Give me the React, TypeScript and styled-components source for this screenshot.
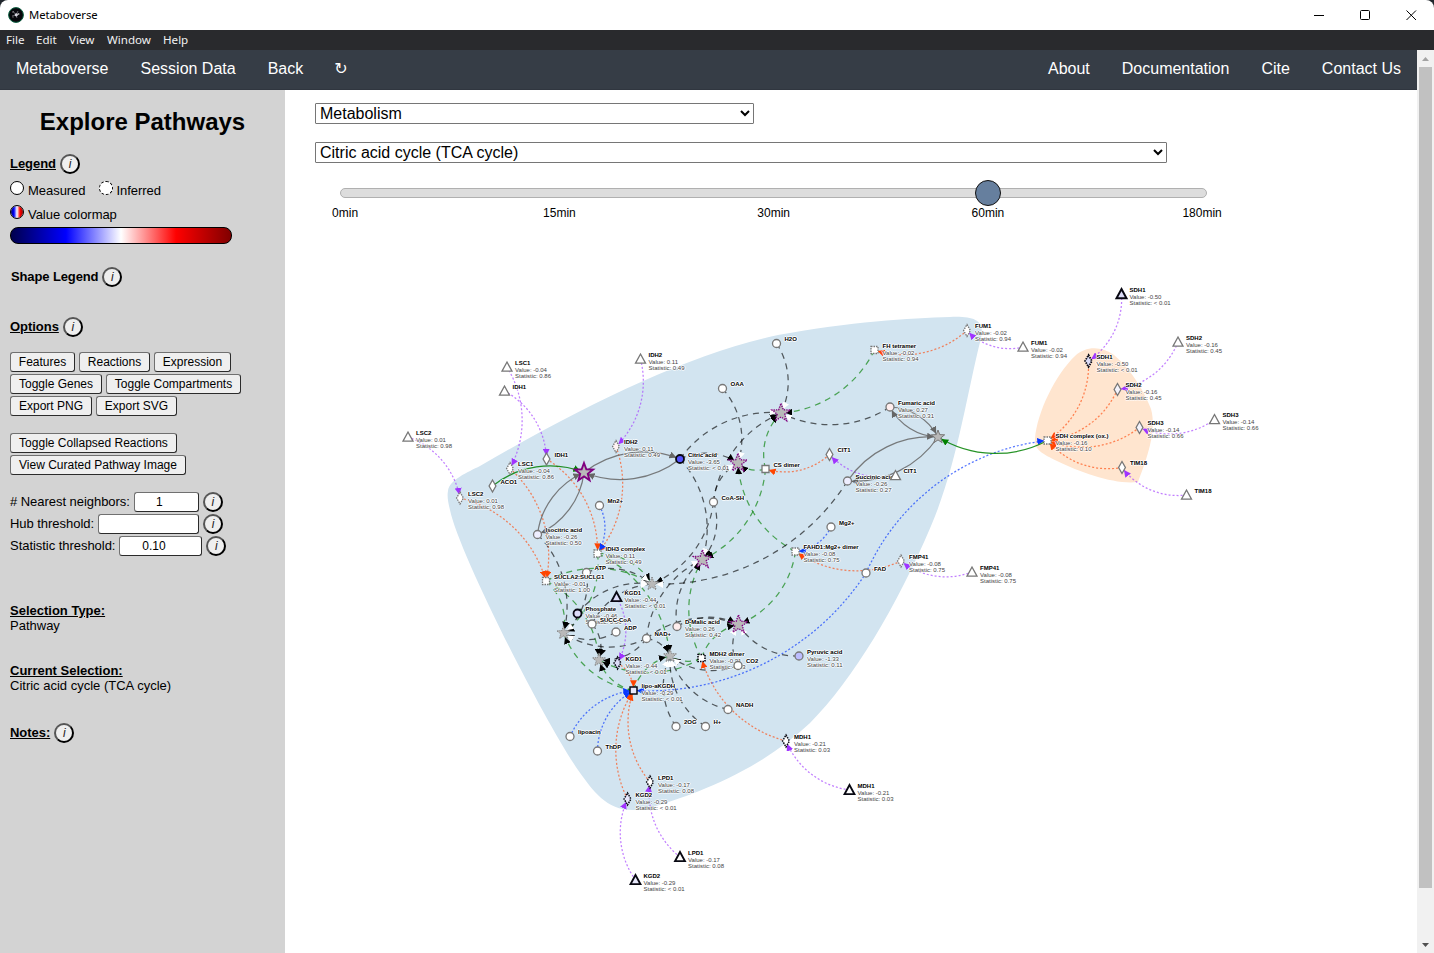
import React from "react";
import styled, { createGlobalStyle, css } from "styled-components";

const Global = createGlobalStyle`
  * { box-sizing: border-box; }
  body { margin: 0; background: #20262c; overflow: hidden; font-family: "Liberation Sans", Arial, sans-serif; color: #000; }
`;

const Window = styled.div`
  width: 1434px; height: 953px; display: flex; flex-direction: column; overflow: hidden;
  background: #fff; border-radius: 8px 8px 0 0;
`;
const TitleBar = styled.header`
  height: 30px; flex: none; display: flex; align-items: center; padding: 0 17px 0 8px;
  font: 11.3px "Noto Sans", sans-serif; letter-spacing: -0.05px;
`;
const TitleText = styled.span`margin: -1px 0 0 5px; flex: 1;`;
const Controls = styled.div`display: flex; gap: 34px; align-items: center; height: 28px;`;
const MenuBar = styled.nav`
  height: 20px; flex: none; background: #292a2d; color: #f1f1f1; display: flex; gap: 12px;
  padding-left: 6px; font: 11.6px/20px "Noto Sans", sans-serif;
`;
const MenuItem = styled.span<{ $w: number }>`width: ${p => p.$w}px; white-space: nowrap;`;
const Below = styled.div`flex: 1; display: flex; min-height: 0;`;
const Page = styled.div`width: 1417px; display: flex; flex-direction: column;`;
const NavBar = styled.nav`
  height: 40px; flex: none; background: #363d46; border-bottom: 1px solid #30363f; color: #fff;
  display: flex; gap: 32px; padding: 0 16px; font-size: 16px; line-height: 37px; white-space: nowrap;
`;
const NavItem = styled.span<{ $push?: boolean }>`${p => p.$push && css`margin-left: auto;`}`;
const Reload = styled.span`font: 16px/38px "DejaVu Sans", sans-serif; margin-left: -1px;`;
const Columns = styled.div`flex: 1; display: flex; min-height: 0;`;

const Sidebar = styled.aside`
  width: 285px; flex: none; background: #d3d3d3; padding: 0 10px; display: flex; flex-direction: column;
  font-size: 13px; line-height: 15px;
`;
const Heading = styled.h1`
  margin: 18px 0 0; height: 28px; font-size: 24px; line-height: 28px; text-align: center; letter-spacing: 0;
`;
const Row = styled.div<{ $h: number; $mt?: number; $gap?: number; $pl?: number }>`
  height: ${p => p.$h}px; margin-top: ${p => p.$mt ?? 0}px; display: flex; align-items: center;
  gap: ${p => p.$gap ?? 4}px; padding-left: ${p => p.$pl ?? 0}px; white-space: nowrap; flex: none;
`;
const Title = styled.b<{ $plain?: boolean }>`
  text-decoration: ${p => (p.$plain ? "none" : "underline")};
  ${p => p.$plain && css`letter-spacing: -0.12px;`}
`;
const Info = styled.button`
  width: 20px; height: 20px; border-radius: 50%; border: 2px outset #555; background: #efefef; padding: 0;
  font: italic 12px/15px "Liberation Sans", sans-serif; text-align: center; flex: none; color: #222;
`;
const Dot = styled.span<{ $dashed?: boolean; $map?: boolean }>`
  width: 14px; height: 14px; border-radius: 50%; flex: none; margin-top: -4px;
  border: 1.5px ${p => (p.$dashed ? "dashed" : "solid")} #000;
  background: ${p => (p.$map ? "linear-gradient(90deg, #00007a, #00f 25%, #fff 50%, #f00 75%, #900) padding-box" : "#fff")};
`;
const ColorBar = styled.div`
  width: 222px; height: 17px; margin-top: 2px; border: 1px solid #000; border-radius: 8px; flex: none;
  background: linear-gradient(90deg, #00004c, #00f 25%, #fff 50%, #f00 75%, #800000);
`;
const Push = styled.button<{ $w: number }>`
  width: ${p => p.$w}px; height: 20px; padding: 0; border: 1px solid; border-color: #707070 #2b2b2b #2b2b2b #707070;
  border-radius: 3px; background: #efefef; color: #000; flex: none;
  font: 12px/17px "Liberation Sans", sans-serif; text-align: center; white-space: nowrap;
`;
const Entry = styled.span<{ $w: number }>`
  width: ${p => p.$w}px; height: 20px; background: #fff; border: 1px solid; border-color: #707070 #2b2b2b #2b2b2b #707070;
  border-radius: 3px; padding-right: 14px; text-align: center; font-size: 12px; line-height: 18px; flex: none;
`;
const Label = styled.span`flex: none; letter-spacing: -0.04px;`;
const Lift = styled.span`display: inline-block; flex: none; margin-top: -2px; letter-spacing: -0.04px;`;
const Block = styled.div<{ $mt: number }>`margin-top: ${p => p.$mt}px; height: 30px; flex: none;`;

const Main = styled.main`flex: 1; display: flex; flex-direction: column; background: #fff; min-width: 0;`;
const Pickers = styled.div`height: 140px; flex: none; padding: 13px 0 0 30px; display: flex; flex-direction: column;`;
const Select = styled.select<{ $w: number }>`
  width: ${p => p.$w}px; height: 21px; margin-bottom: 18px; flex: none; font: 16px "Liberation Sans", sans-serif;
  background: #fff; color: #000; border: 1px solid #767676; border-radius: 1px; padding: 0;
`;
const Track = styled.div`
  width: 867px; height: 10px; margin: 7px 0 0 25px; border: 1px solid #b0b0b0; border-radius: 5px; background: #ddd;
  display: flex; align-items: center; padding-left: 634px; flex: none;
`;
const Thumb = styled.span`width: 26px; height: 26px; border-radius: 50%; background: #667f9e; border: 1px solid #111; flex: none;`;
const Ticks = styled.div`
  display: grid; grid-template-columns: repeat(5, 214.25px); width: 1072px; margin: 8px 0 0 -77px;
  font-size: 12px; line-height: 15px; text-align: center;
`;
const Graph = styled.svg`
  width: 1132px; height: 723px; flex: none; display: block; font: 6px "Liberation Sans", Arial, sans-serif;
`;
const NodeName = styled.text`
  font-weight: bold; fill: #000; text-shadow: 0 1px 0 #fff, 1px 0 0 #fff, 0 -1px 0 #fff, -1px 0 0 #fff;
`;
const NodeStat = styled.text`fill: #444; text-shadow: 0 1px 0 #fff, 1px 0 0 #fff, 0 -1px 0 #fff, -1px 0 0 #fff;`;

const ScrollBar = styled.div`
  width: 17px; background: #f1f1f1; display: flex; flex-direction: column; align-items: center; flex: none;
`;
const ScrollThumb = styled.div`width: 13px; height: 821px; background: #c1c1c1; flex: none;`;
const ScrollDown = styled.svg`margin-top: auto;`;

type P = [number, number];
type Node = { p: P; t: "c" | "t" | "d" | "s"; n: string; v?: string; s?: string; fill?: string; w?: number; dash?: boolean };

const nodes: Record<string, Node> = {
  sdh1t: { p: [1121.5, 294], t: "t", n: "SDH1", v: "-0.50", s: "< 0.01", w: 2, fill: "#dcdcf8" },
  sdh2t: { p: [1178, 342], t: "t", n: "SDH2", v: "-0.16", s: "0.45" },
  sdh3t: { p: [1214.5, 419.5], t: "t", n: "SDH3", v: "-0.14", s: "0.66" },
  tim18t: { p: [1186.5, 495], t: "t", n: "TIM18" },
  fum1t: { p: [1023, 347], t: "t", n: "FUM1", v: "-0.02", s: "0.94" },
  lsc1t: { p: [507, 367], t: "t", n: "LSC1", v: "-0.04", s: "0.86" },
  idh1t: { p: [504.5, 391], t: "t", n: "IDH1" },
  idh2t: { p: [640.5, 359], t: "t", n: "IDH2", v: "0.11", s: "0.49" },
  lsc2t: { p: [408, 437], t: "t", n: "LSC2", v: "0.01", s: "0.98" },
  fmp41t: { p: [972, 572], t: "t", n: "FMP41", v: "-0.08", s: "0.75" },
  mdh1t: { p: [849.5, 790], t: "t", n: "MDH1", v: "-0.21", s: "0.03", w: 1.8 },
  lpd1t: { p: [680, 857], t: "t", n: "LPD1", v: "-0.17", s: "0.08", w: 1.8 },
  kgd2t: { p: [635.5, 880], t: "t", n: "KGD2", v: "-0.29", s: "< 0.01", w: 1.8, fill: "#e8e8fb" },
  sdh1: { p: [1088.5, 361], t: "d", n: "SDH1", v: "-0.50", s: "< 0.01", w: 1.8, dash: true, fill: "#dcdcf8" },
  sdh2: { p: [1117.5, 389.5], t: "d", n: "SDH2", v: "-0.16", s: "0.45", fill: "#f4f4fd" },
  sdh3: { p: [1139.5, 427.5], t: "d", n: "SDH3", v: "-0.14", s: "0.66", fill: "#f4f4fd" },
  tim18: { p: [1122, 467.5], t: "d", n: "TIM18" },
  sdhc: { p: [1047.5, 440.5], t: "s", n: "SDH complex (ox.)", v: "-0.16", s: "0.10", dash: true },
  fum1: { p: [967, 330.5], t: "d", n: "FUM1", v: "-0.02", s: "0.94", dash: true },
  fh: { p: [874.5, 350], t: "s", n: "FH tetramer", v: "-0.02", s: "0.94", dash: true },
  h2o: { p: [776.5, 343.5], t: "c", n: "H2O" },
  oaa: { p: [722.5, 388.5], t: "c", n: "OAA" },
  lsc1: { p: [510, 468.5], t: "d", n: "LSC1", v: "-0.04", s: "0.86", dash: true },
  idh1: { p: [546.5, 459], t: "d", n: "IDH1" },
  aco1: { p: [492.5, 486], t: "d", n: "ACO1" },
  lsc2: { p: [460, 498], t: "d", n: "LSC2", v: "0.01", s: "0.98", dash: true },
  idh2: { p: [616, 446.5], t: "d", n: "IDH2", v: "0.11", s: "0.49", dash: true, fill: "#fff4f4" },
  citric: { p: [680, 459], t: "c", n: "Citric acid", v: "-3.65", s: "< 0.01", w: 1.8, fill: "#5353ff" },
  fumaric: { p: [890, 407], t: "c", n: "Fumaric acid", v: "0.27", s: "0.31", fill: "#ffeeee" },
  cit1: { p: [829.5, 454.5], t: "d", n: "CIT1" },
  succinic: { p: [847.5, 481], t: "c", n: "Succinic acid", v: "-0.26", s: "0.27", fill: "#eeeeff" },
  cit1t: { p: [895.5, 475.5], t: "t", n: "CIT1" },
  cs: { p: [765.5, 469], t: "s", n: "CS dimer" },
  coa: { p: [713.5, 502], t: "c", n: "CoA-SH" },
  mn: { p: [599.5, 505.5], t: "c", n: "Mn2+" },
  iso: { p: [537.5, 534.5], t: "c", n: "Isocitric acid", v: "-0.26", s: "0.50", fill: "#eeeeff" },
  idh3: { p: [597.5, 553.5], t: "s", n: "IDH3 complex", v: "0.11", s: "0.49", dash: true },
  mg: { p: [831, 527], t: "c", n: "Mg2+" },
  fahd: { p: [795.5, 551.5], t: "s", n: "FAHD1:Mg2+ dimer", v: "-0.08", s: "0.75", dash: true },
  fad: { p: [866, 573], t: "c", n: "FAD" },
  fmp41: { p: [901, 561], t: "d", n: "FMP41", v: "-0.08", s: "0.75", dash: true },
  atp: { p: [586.5, 572.5], t: "c", n: "ATP" },
  sucla: { p: [546, 581], t: "s", n: "SUCLA2:SUCLG1", v: "-0.01", s: "1.00", dash: true },
  kgd1t: { p: [616.5, 597], t: "t", n: "KGD1", v: "-0.44", s: "< 0.01", w: 1.8, fill: "#dcdcf8" },
  phos: { p: [577.5, 613.5], t: "c", n: "Phosphate", v: "-0.46", s: "0.06", w: 1.8, fill: "#dcdcf8" },
  succoa: { p: [592, 624], t: "c", n: "SUCC-CoA" },
  adp: { p: [616, 632], t: "c", n: "ADP" },
  nad: { p: [646.5, 638.5], t: "c", n: "NAD+" },
  malic: { p: [677, 626.5], t: "c", n: "D-Malic acid", v: "0.26", s: "0.42", fill: "#ffeeee" },
  mdh2: { p: [701.5, 658], t: "s", n: "MDH2 dimer", v: "-0.21", s: "0.03", dash: true, w: 1.6 },
  co2: { p: [738, 665.5], t: "c", n: "CO2" },
  pyr: { p: [799, 656], t: "c", n: "Pyruvic acid", v: "-1.33", s: "0.11", fill: "#bdbdff" },
  kgd1: { p: [617.5, 663], t: "d", n: "KGD1", v: "-0.44", s: "< 0.01", w: 1.6, dash: true, fill: "#dcdcf8" },
  lipo: { p: [633.5, 690.5], t: "s", n: "lipo-aKGDH", v: "-0.29", s: "< 0.01", w: 1.5, fill: "#e8e8fb" },
  nadh: { p: [728, 709.5], t: "c", n: "NADH" },
  og: { p: [676, 726.5], t: "c", n: "2OG" },
  h: { p: [705.5, 726.5], t: "c", n: "H+" },
  lipoa: { p: [570, 736.5], t: "c", n: "lipoacin" },
  thdp: { p: [597.5, 751], t: "c", n: "ThDP" },
  mdh1: { p: [786, 741], t: "d", n: "MDH1", v: "-0.21", s: "0.03", w: 1.5, dash: true },
  lpd1: { p: [650, 782], t: "d", n: "LPD1", v: "-0.17", s: "0.08", w: 1.5, dash: true },
  kgd2: { p: [627.5, 799], t: "d", n: "KGD2", v: "-0.29", s: "< 0.01", w: 1.5, dash: true, fill: "#e8e8fb" },
};

const stars: Record<string, { p: P; r: number; k: "big" | "dot" | "gray" }> = {
  r1: { p: [584, 472.5], r: 9.5, k: "big" },
  r2: { p: [738, 463], r: 9.5, k: "dot" },
  r3: { p: [781, 413], r: 9.5, k: "dot" },
  r4: { p: [702.5, 559.5], r: 9.5, k: "dot" },
  r5: { p: [738.5, 624.5], r: 9.5, k: "dot" },
  r6: { p: [670, 656], r: 7, k: "gray" },
  r7: { p: [652, 584], r: 7, k: "gray" },
  r8: { p: [599, 660], r: 7, k: "gray" },
  r9: { p: [563.5, 633], r: 7, k: "gray" },
  r10: { p: [938, 437], r: 7, k: "gray" },
};

const kinds: Record<string, { c: string; d?: string; m: string; o?: number; w?: number }> = {
  purple: { c: "#a23cff", d: "2 2", m: "purple", o: 0.65 },
  orange: { c: "#ff4a0a", d: "2 2", m: "orange", o: 0.65 },
  blue: { c: "#0838ff", d: "2 2", m: "blue", o: 0.68 },
  gray: { c: "#666", m: "gray", o: 0.85 },
  green: { c: "#008000", m: "green", o: 0.85 },
  gdash: { c: "#008000", d: "6 5", m: "black", o: 0.65 },
  inp: { c: "#000", d: "6 5", m: "black", o: 0.62 },
  out: { c: "#000", d: "6 5", m: "white", o: 0.62 },
};

const links: Record<string, string> = {
  purple: "sdh1t>sdh1 sdh2t>sdh2 sdh3t>sdh3 tim18t>tim18 fum1t>fum1 lsc1t>lsc1 idh1t>idh1 idh2t>idh2 lsc2t>lsc2 fmp41t>fmp41 mdh1t>mdh1 lpd1t>lpd1 kgd2t>kgd2 cit1t>cit1 kgd1t>kgd1",
  orange: "sdh1>sdhc sdh2>sdhc sdh3>sdhc tim18>sdhc fum1>fh lsc1>sucla lsc2>sucla idh1>idh3 idh2>idh3 cit1>cs fmp41>fahd mdh1>mdh2 lpd1>lipo kgd2>lipo kgd1>lipo",
  blue: "fad>sdhc fad>lipo mn>idh3 mg>fahd lipoa>lipo thdp>lipo",
  gray: "citric>r1 r1>citric iso>r1 r1>iso fumaric>r10 r10>fumaric succinic>r10 r10>succinic",
  green: "aco1>r1 sdhc>r10",
  gdash: "fh>r3 cs>r3 cs>r2 cs>r4 fahd>r2 fahd>r5 mdh2>r5 mdh2>r4 mdh2>r6 mdh2>r8 idh3>r7 idh3>r6 idh3>r9 sucla>r7 sucla>r9 sucla>r8 lipo>r9 lipo>r8 lipo>r6",
  inp: "coa>r3 citric>r2 coa>r4 malic>r4 malic>r5 nad>r5 nad>r6 iso>r9 phos>r9 adp>r9 succoa>r8 nad>r8 coa>r7",
  out: "citric>r3 h2o>r3 fumaric>r3 oaa>r2 coa>r2 citric>r4 nad>r4 succinic>r7 atp>r7 phos>r7 succoa>r7 atp>r9 nad>r9 co2>r5 pyr>r5 co2>r6 nadh>r6 h>r6 og>r6",
};

const at = (k: string): P => (nodes[k] ?? stars[k]).p;

const arc = (id: string) => {
  const [a, b] = id.split(">").map(at);
  const r = Math.hypot(b[0] - a[0], b[1] - a[1]);
  return `M${a[0]},${a[1]}A${r},${r} 0 0,1 ${b[0]},${b[1]}`;
};

const starPath = (r: number) =>
  Array.from({ length: 10 }, (_, i) => {
    const a = (Math.PI * i) / 5 - Math.PI / 2;
    const q = i % 2 ? r * 0.42 : r;
    return `${i ? "L" : "M"}${(q * Math.cos(a)).toFixed(2)},${(q * Math.sin(a)).toFixed(2)}`;
  }).join("") + "Z";

const shapes = {
  c: "M-4,0A4,4 0 1,1 4,0A4,4 0 1,1 -4,0Z",
  t: "M0,-5L5,4.2L-5,4.2Z",
  d: "M0,-6L3.4,0L0,6L-3.4,0Z",
  s: "M-3.5,-3.5H3.5V3.5H-3.5Z",
};

const markers: [string, string, number][] = [
  ["purple", "#a034ff", 14.6], ["orange", "#ff4500", 14.6], ["blue", "#0838ff", 14.6],
  ["gray", "#666", 15.5], ["green", "#008000", 15.5], ["black", "#000", 16], ["white", "#fff", 16],
];

function Network() {
  return (
    <Graph viewBox="285 230 1132 723">
      <defs>
        {markers.map(([id, c, ref]) => (
          <marker key={id} id={id} viewBox="0 -5 10 10" refX={ref} refY="0" markerWidth="7" markerHeight="7" orient="auto" markerUnits="userSpaceOnUse">
            <path d="M0,-5L10,0L0,5Z" fill={c} />
          </marker>
        ))}
      </defs>
      <path fill="#d2e4f0" d="M448,491C449,480 468,472 480,466C590,402 690,354 778,335C850,322 910,318 950,317C974,316 985,320 981,338C966,398 957,465 931,526C897,606 853,680 810,723C757,773 690,796 649,808C611,817 596,795 578,770C540,714 458,550 450,510C448,502 447,496 448,491Z" />
      <path fill="#ffe5cf" d="M1035,439C1037,412 1056,374 1075,356C1086,346 1101,346 1114,355C1132,370 1145,393 1151,409C1157,430 1147,459 1138,482C1116,485 1082,473 1057,461C1043,454 1034,450 1035,439Z" />
      {Object.entries(links).map(([kind, list]) => {
        const k = kinds[kind];
        return list.split(" ").map(id => (
          <path key={kind + id} d={arc(id)} fill="none" stroke={k.c} strokeWidth={1.25} strokeOpacity={k.o}
            strokeDasharray={k.d} markerEnd={`url(#${k.m})`} />
        ));
      })}
      {Object.entries(stars).map(([k, s]) => (
        <path key={k} d={starPath(s.r)} transform={`translate(${s.p[0]},${s.p[1]})`} fill="#b9b9b9"
          stroke={s.k === "gray" ? "#777" : "#800080"} strokeWidth={s.k === "big" ? 1.9 : s.k === "dot" ? 1.4 : 1}
          strokeDasharray={s.k === "dot" ? "1.3 1.1" : s.k === "gray" && k !== "r10" ? "1 1" : undefined} />
      ))}
      {Object.entries(nodes).map(([k, n]) => (
        <g key={k} transform={`translate(${n.p[0]},${n.p[1]})`}>
          <path d={shapes[n.t]} fill={n.fill ?? "#fff"} stroke={(n.w ?? 1) > 1 ? "#080812" : "#777"}
            strokeWidth={n.w ?? 1.3} strokeDasharray={n.dash ? "1.5 1" : undefined} />
          <NodeName x="8" y="-2.4">{n.n}</NodeName>
          {n.v && <NodeStat x="8" y="4.7">Value: {n.v}</NodeStat>}
          {n.s && <NodeStat x="8" y="10.8">Statistic: {n.s}</NodeStat>}
        </g>
      ))}
    </Graph>
  );
}

const I = () => <Info>i</Info>;

export default function App() {
  return (
    <>
      <Global />
      <Window>
        <TitleBar>
          <svg width="16" height="16" viewBox="0 0 16 16">
            <circle cx="8" cy="8" r="7.4" fill="#08070c" stroke="#0a6242" />
            <path d="M5 4l3 4 3-1M4 9l4-1 1 3M8 8l2-4" stroke="#777580" strokeWidth=".8" fill="none" />
            <circle cx="8.3" cy="7.8" r="1.6" fill="#d7d4dd" /><circle cx="10.5" cy="7" r="1" fill="#aaa" />
            <circle cx="5" cy="5" r=".8" fill="#888" /><circle cx="5" cy="10" r=".7" fill="#777" />
          </svg>
          <TitleText>Metaboverse</TitleText>
          <Controls>
            {["M1 6.5H11", "M2.5 1.5H9.5Q10.5 1.5 10.5 2.5V9.5Q10.5 10.5 9.5 10.5H2.5Q1.5 10.5 1.5 9.5V2.5Q1.5 1.5 2.5 1.5Z", "M1.5 1.5L11 11M11 1.5L1.5 11"].map(d => (
              <svg key={d} width="12" height="12"><path d={d} fill="none" stroke="#000" /></svg>
            ))}
          </Controls>
        </TitleBar>
        <MenuBar>
          <MenuItem $w={18}>File</MenuItem><MenuItem $w={21}>Edit</MenuItem><MenuItem $w={26}>View</MenuItem>
          <MenuItem $w={44}>Window</MenuItem><MenuItem $w={26}>Help</MenuItem>
        </MenuBar>
        <Below>
          <Page>
            <NavBar>
              <NavItem>Metaboverse</NavItem><NavItem>Session Data</NavItem><NavItem>Back</NavItem><Reload>↻</Reload>
              <NavItem $push>About</NavItem><NavItem>Documentation</NavItem><NavItem>Cite</NavItem><NavItem>Contact Us</NavItem>
            </NavBar>
            <Columns>
              <Sidebar>
                <Heading>Explore Pathways</Heading>
                <Row $h={20} $mt={18}><Lift><Title>Legend</Title></Lift><I /></Row>
                <Row $h={22} $mt={5}><Dot /><Label>Measured</Label><Row $h={22} $pl={9}><Dot $dashed /><Label>Inferred</Label></Row></Row>
                <Row $h={22} $mt={2}><Dot $map /><Label>Value colormap</Label></Row>
                <ColorBar />
                <Row $h={20} $mt={23} $pl={1}><Lift><Title $plain>Shape Legend</Title></Lift><I /></Row>
                <Row $h={20} $mt={30}><Lift><Title>Options</Title></Lift><I /></Row>
                <Row $h={20} $mt={15}><Push $w={65}>Features</Push><Push $w={71}>Reactions</Push><Push $w={77}>Expression</Push></Row>
                <Row $h={20} $mt={2}><Push $w={92}>Toggle Genes</Push><Push $w={135}>Toggle Compartments</Push></Row>
                <Row $h={20} $mt={2}><Push $w={82}>Export PNG</Push><Push $w={81}>Export SVG</Push></Row>
                <Row $h={20} $mt={17}><Push $w={167}>Toggle Collapsed Reactions</Push></Row>
                <Row $h={20} $mt={2}><Push $w={176}>View Curated Pathway Image</Push></Row>
                <Row $h={20} $mt={17}><Lift># Nearest neighbors:</Lift><Entry $w={65}>1</Entry><I /></Row>
                <Row $h={20} $mt={2}><Lift>Hub threshold:</Lift><Entry $w={101} /><I /></Row>
                <Row $h={20} $mt={2}><Lift>Statistic threshold:</Lift><Entry $w={83}>0.10</Entry><I /></Row>
                <Block $mt={47}><Title>Selection Type:</Title><br />Pathway</Block>
                <Block $mt={30}><Title>Current Selection:</Title><br />Citric acid cycle (TCA cycle)</Block>
                <Row $h={20} $mt={30}><Lift><Title>Notes:</Title></Lift><I /></Row>
              </Sidebar>
              <Main>
                <Pickers>
                  <Select $w={439}><option>Metabolism</option></Select>
                  <Select $w={852}><option>Citric acid cycle (TCA cycle)</option></Select>
                  <Track><Thumb /></Track>
                  <Ticks>{["0min", "15min", "30min", "60min", "180min"].map(t => <span key={t}>{t}</span>)}</Ticks>
                </Pickers>
                <Network />
              </Main>
            </Columns>
          </Page>
          <ScrollBar>
            <svg width="17" height="17"><path d="M5 11L8.5 7L12 11Z" fill="#a3a3a3" /></svg>
            <ScrollThumb />
            <ScrollDown width="17" height="17"><path d="M5 7L8.5 11L12 7Z" fill="#505050" /></ScrollDown>
          </ScrollBar>
        </Below>
      </Window>
    </>
  );
}
